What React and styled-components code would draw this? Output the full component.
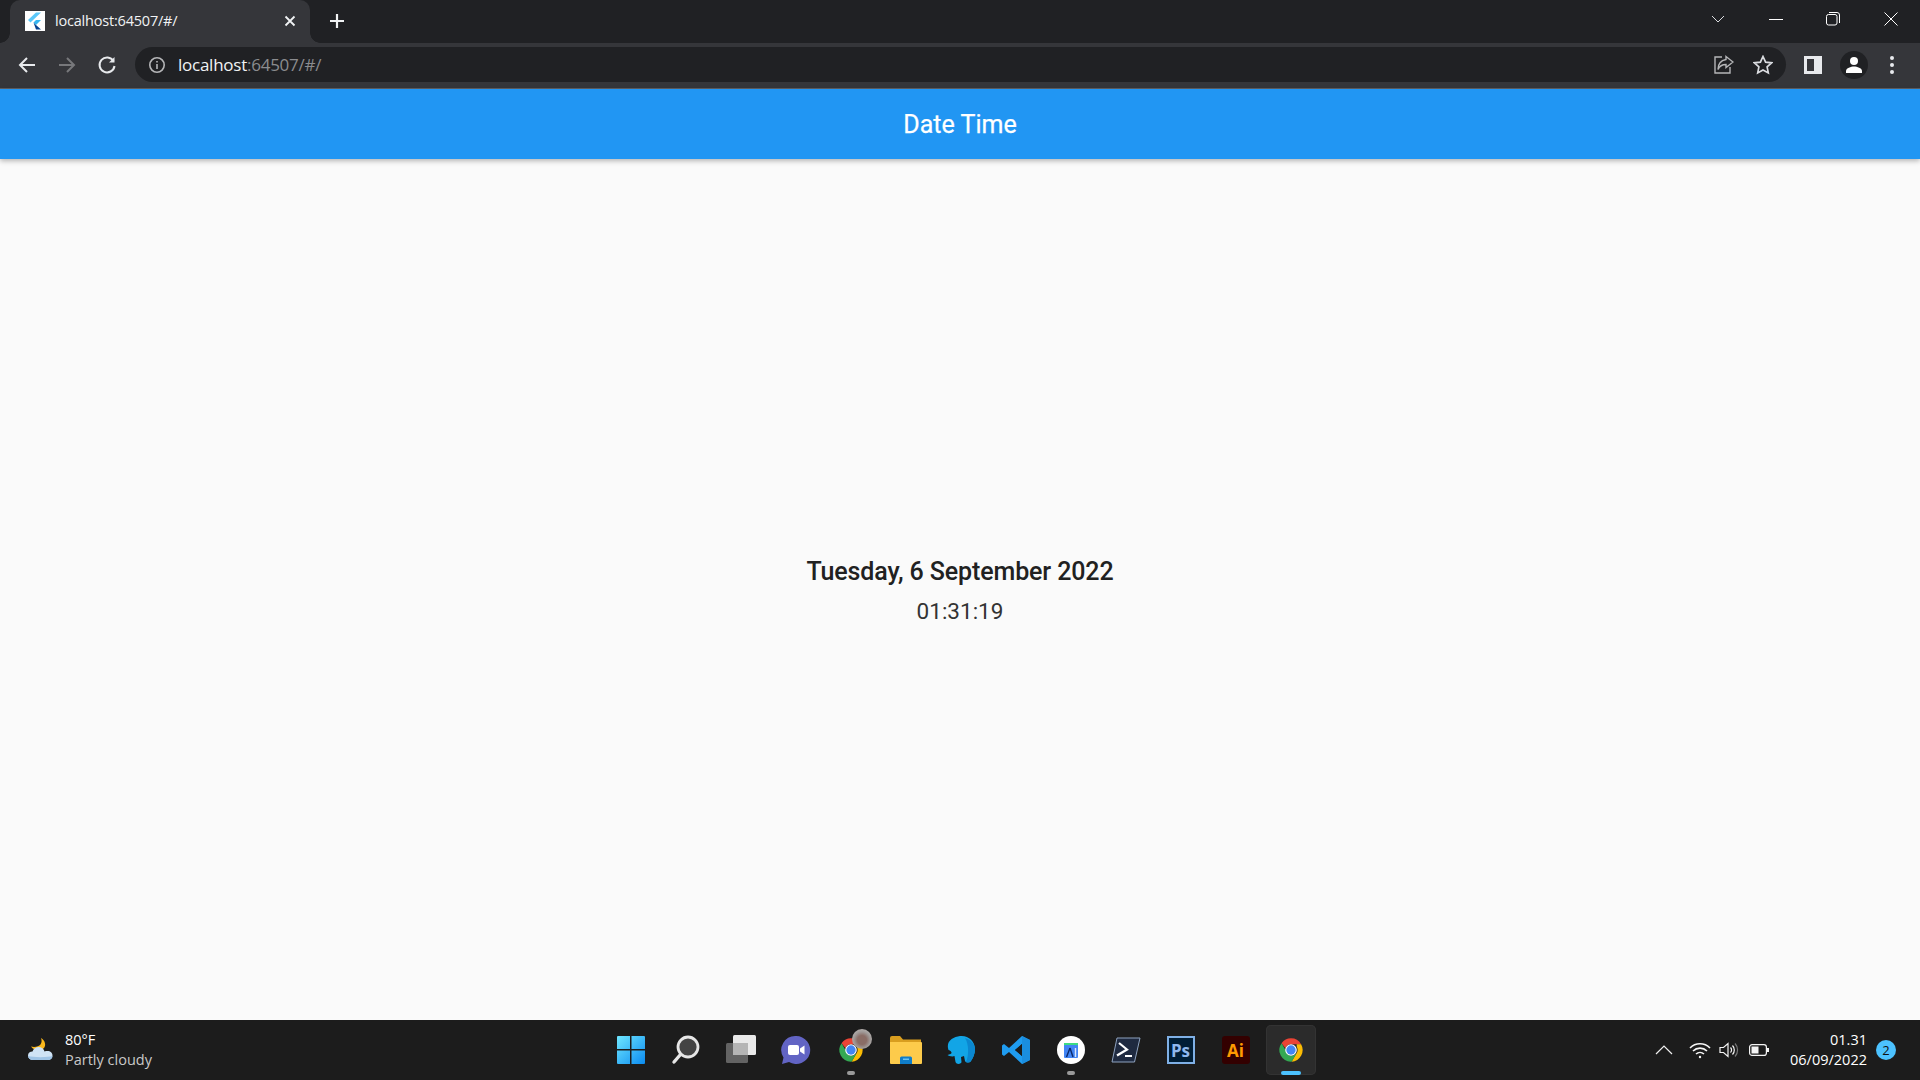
import React from "react";
import styled, { createGlobalStyle } from "styled-components";

const GlobalStyle = createGlobalStyle`
    html, body {
        margin: 0;
        padding: 0;
        width: 1920px;
        height: 1080px;
        overflow: hidden;
    }
    * {
        box-sizing: border-box;
    }
`;

const Page = styled.div`
    display: flex;
    flex-direction: column;
    width: 1920px;
    height: 1080px;
    background-color: #fafafa;
    font-family: "Roboto", sans-serif;
`;

/* browser chrome */
const TabStrip = styled.div`
    display: flex;
    align-items: flex-end;
    height: 43px;
    padding-left: 10px;
    background-color: #202124;
    flex-shrink: 0;
`;

const Tab = styled.div`
    position: relative;
    display: flex;
    align-items: center;
    width: 300px;
    height: 43px;
    padding: 0 12px 1px 15px;
    background-color: #35363a;
    border-radius: 10px 10px 0 0;

    &::before,
    &::after {
        content: "";
        position: absolute;
        bottom: 0;
        width: 10px;
        height: 10px;
        background: radial-gradient(circle at var(--cx) 0, #202124 9.5px, #35363a 10px);
    }
    &::before {
        --cx: 0;
        left: -10px;
    }
    &::after {
        --cx: 100%;
        right: -10px;
    }
`;

const Favicon = styled.div`
    display: flex;
    align-items: center;
    justify-content: center;
    width: 20px;
    height: 20px;
    background-color: #fff;
    flex-shrink: 0;
`;

const TabTitle = styled.span`
    flex: 1;
    margin-left: 10px;
    margin-top: -2px;
    font-family: "Open Sans", sans-serif;
    font-size: 14.5px;
    letter-spacing: -0.2px;
    color: #f1f3f4;
    white-space: nowrap;
`;

const NewTab = styled.div`
    display: flex;
    align-items: center;
    justify-content: center;
    width: 24px;
    height: 24px;
    margin: 0 0 10px 15px;
`;

const Caption = styled.div`
    display: flex;
    align-items: center;
    margin-left: auto;
    height: 43px;
    padding-bottom: 6px;
`;

const CaptionButton = styled.div`
    display: flex;
    align-items: center;
    justify-content: center;
    width: ${(p) => p.$w || 57.5}px;
`;

const Toolbar = styled.div`
    display: flex;
    align-items: center;
    height: 46px;
    padding: 0 10px 2px 7px;
    background-color: #35363a;
    border-bottom: 1px solid #5f6064;
    flex-shrink: 0;
`;

const ToolButton = styled.div`
    display: flex;
    align-items: center;
    justify-content: center;
    width: ${(p) => p.$w || 40}px;
    height: 35px;
    flex-shrink: 0;
`;

const AddressBar = styled.div`
    display: flex;
    align-items: center;
    flex: 1;
    height: 35px;
    margin: 0 7px 0 8px;
    padding: 0 5px 0 13px;
    background-color: #202124;
    border-radius: 18px;
`;

const Url = styled.span`
    flex: 1;
    margin-left: 12px;
    font-family: "Open Sans", sans-serif;
    font-size: 17px;
    letter-spacing: -0.25px;
    color: #f1f3f4;

    span {
        color: #8b8c8f;
    }
`;

const ProfileDot = styled.div`
    display: flex;
    align-items: center;
    justify-content: center;
    width: 28px;
    height: 28px;
    border-radius: 50%;
    background-color: #202124;
`;

/* flutter app */
const AppBar = styled.header`
    display: flex;
    align-items: center;
    justify-content: center;
    height: 70px;
    background-color: #2196f3;
    box-shadow: 0 2px 5px rgba(0, 0, 0, 0.28);
    flex-shrink: 0;
    position: relative;
`;

const AppTitle = styled.h1`
    margin: 0 0 -1px;
    font-size: 25px;
    font-weight: 400;
    -webkit-text-stroke: 0.25px #fff;
    color: #fff;
`;

const Main = styled.main`
    display: flex;
    flex: 1;
    flex-direction: column;
    align-items: center;
    justify-content: center;
    gap: 11px;
    padding-top: 2px;
    color: #212121;
`;

const DateText = styled.div`
    font-size: 25px;
    font-weight: 500;
    line-height: 30px;
    letter-spacing: -0.12px;
`;

const TimeText = styled.div`
    font-size: 22.5px;
    font-weight: 400;
    line-height: 26px;
    color: #333;
`;

/* windows taskbar */
const Taskbar = styled.footer`
    display: grid;
    grid-template-columns: 1fr auto 1fr;
    align-items: center;
    height: 60px;
    background-color: #1c1c1c;
    flex-shrink: 0;
`;

const Weather = styled.div`
    display: flex;
    align-items: center;
    padding-left: 26px;
`;

const WeatherText = styled.div`
    margin-left: 11px;
    font-family: "Open Sans", sans-serif;
    font-size: 14.5px;
    line-height: 20px;
    color: #fff;

    div + div {
        color: #c9c9c9;
    }
`;

const TaskIcons = styled.div`
    display: flex;
    gap: 5px;
    margin-left: 1px;
`;

const TaskItem = styled.div`
    position: relative;
    display: flex;
    align-items: center;
    justify-content: center;
    width: 50px;
    height: 50px;
    border-radius: 5px;
    background-color: ${(p) => (p.$active ? "#2b2b2b" : "transparent")};
    box-shadow: ${(p) => (p.$active ? "inset 0 0 0 1px #333" : "none")};
`;

const RunDot = styled.span`
    position: absolute;
    left: 50%;
    bottom: 0;
    transform: translateX(-50%);
    width: ${(p) => (p.$active ? 20 : 8)}px;
    height: 4px;
    border-radius: 2px;
    background-color: ${(p) => (p.$active ? "#4cc2ff" : "#9a9a9a")};
`;

const Avatar = styled.span`
    position: absolute;
    top: 4px;
    right: 4px;
    width: 20px;
    height: 20px;
    border-radius: 50%;
    background: radial-gradient(circle at 50% 55%, #8a6d66 0 30%, #a09a98 55%, #c9c6c4 100%);
`;

const Tray = styled.div`
    display: flex;
    align-items: center;
    justify-content: flex-end;
    padding-right: 24px;
`;

const TrayIcon = styled.div`
    display: flex;
    align-items: center;
    justify-content: center;
    width: ${(p) => p.$w}px;
`;

const Clock = styled.div`
    margin: 0 9px 0 15px;
    font-family: "Open Sans", sans-serif;
    font-size: 14.5px;
    line-height: 20px;
    text-align: right;
    color: #fff;
`;

const Badge = styled.div`
    display: flex;
    align-items: center;
    justify-content: center;
    width: 20px;
    height: 20px;
    border-radius: 50%;
    background-color: #4cc2ff;
    font-family: "Open Sans", sans-serif;
    font-size: 13px;
    color: #111;
`;

const FlutterLogo = () => (
    <svg width="16" height="18" viewBox="0 0 16 18">
        <path d="M9 0.500h5L3.500 10.500 1 8z" fill="#5ac8fa" />
        <path d="M9 8h5l-5 5-2.500-2.500z" fill="#35b5f0" />
        <path d="M6.500 10.500L9 13l5 4.500H9z" fill="#05408f" />
    </svg>
);

const Stroke = ({ w = 20, h = 20, view, color = "#e8eaed", sw = 2, children }) => (
    <svg width={w} height={h} viewBox={view || `0 0 ${w} ${h}`} fill="none" stroke={color} strokeWidth={sw}>
        {children}
    </svg>
);

const WeatherIcon = () => (
    <svg width="28" height="28" viewBox="0 0 28 28">
        <path d="M15 2c2 5-1 9-7 9-1 0-2 0-3-.4C7 14 13 16 17 13c4-3 2-9-2-11z" fill="#fbb81c" />
        <path d="M7 24c-3 0-5-2-5-4.500S4 15.500 6.500 15.500C7.500 12.500 10 11 12.500 11c3 0 5.500 2 6 4.500 1-.5 2-.5 3-.5 3 0 5 2 5 4.500S24.500 24 22 24z" fill="#cfe3f5" />
        <path d="M7 24c-3 0-5-2-5-4 5 1.500 20 1.500 24.500 0 0 2.500-2 4-4.500 4z" fill="#9fc4e6" />
    </svg>
);

const StartIcon = () => (
    <svg width="30" height="30" viewBox="0 0 30 30">
        <defs>
            <linearGradient id="win" x1="0" y1="0" x2="1" y2="1">
                <stop offset="0" stopColor="#6fe7ff" />
                <stop offset="1" stopColor="#0b8bf0" />
            </linearGradient>
        </defs>
        <path d="M1 2a1 1 0 0 1 1-1h12v13H1zM15.500 1H28a1 1 0 0 1 1 1v12H15.500zM1 15.500h13V29H2a1 1 0 0 1-1-1zM15.500 15.500H29V28a1 1 0 0 1-1 1H15.500z" fill="url(#win)" />
    </svg>
);

const SearchIcon = () => (
    <svg width="30" height="30" viewBox="0 0 30 30">
        <circle cx="17" cy="12" r="10" fill="#444" stroke="#e6e6e6" strokeWidth="2.800" />
        <path d="M9.500 19.500L3 27" stroke="#e6e6e6" strokeWidth="3.400" strokeLinecap="round" />
    </svg>
);

const TaskViewIcon = () => (
    <svg width="32" height="30" viewBox="0 0 32 30">
        <rect x="8" y="0" width="23" height="20" rx="1.500" fill="#e9e9e9" />
        <rect x="1" y="8" width="22" height="20" rx="1.500" fill="#6b6b6b" fillOpacity="0.9" />
        <rect x="8" y="8" width="15" height="12" fill="#b5b5b5" />
    </svg>
);

const TeamsIcon = () => (
    <svg width="30" height="30" viewBox="0 0 30 30">
        <path d="M15 1a14 14 0 1 1-7 26L1 29l1.500-6.500A14 14 0 0 1 15 1z" fill="#6264c4" />
        <rect x="7" y="10" width="11" height="10" rx="2" fill="#fff" />
        <path d="M19 13.500l4.500-3v9l-4.500-3z" fill="#fff" />
    </svg>
);

const ChromeIcon = ({ size = 28 }) => (
    <svg width={size} height={size} viewBox="0 0 48 48">
        <path d="M24 4a20 20 0 0 1 17.300 10H24a10 10 0 0 0-9.500 6.800L7.800 12.300A20 20 0 0 1 24 4z" fill="#ea4335" />
        <path d="M41.300 14A20 20 0 0 1 25 44l8.500-14.500A10 10 0 0 0 34 19l-.300-5z" fill="#fbbc04" />
        <path d="M25 44A20 20 0 0 1 7.800 12.300l8.500 14.500a10 10 0 0 0 11.500 6.500l5.700-3.800z" fill="#34a853" />
        <circle cx="24" cy="24" r="10" fill="#fff" />
        <circle cx="24" cy="24" r="8" fill="#4285f4" />
    </svg>
);

const FilesIcon = () => (
    <svg width="32" height="28" viewBox="0 0 32 28">
        <path d="M0 2a2 2 0 0 1 2-2h8l3 3.500h18V27H1a1 1 0 0 1-1-1z" fill="#d99e1f" />
        <path d="M0 6h31a1 1 0 0 1 1 1v20a1 1 0 0 1-1 1H1a1 1 0 0 1-1-1z" fill="#fdcb4b" />
        <path d="M10 28v-6a1.500 1.500 0 0 1 1.500-1.500h9A1.500 1.500 0 0 1 22 22v6z" fill="#0f7dc9" />
        <rect x="13" y="22.500" width="6" height="1.500" fill="#6cc4f2" />
    </svg>
);

const ElephantIcon = () => (
    <svg width="30" height="30" viewBox="0 0 30 30">
        <path d="M14 1c8-1 15 5 15 13 0 5-2 9-4 12-1 2-5 2-6 0l-1-5-3 1 .5 5c0 2-5 3-6 0l-1-6c-2 1-6 0-7-1l3-1c2-1 1-3-2-4C-.500 6 7 2 14 1z" fill="#12a5e6" />
        <path d="M19 3c6 2 10 6 10 11 0 5-2 9-4 12-1 1-3 2-5 1 3-6 3-18-1-24z" fill="#0b87cf" />
    </svg>
);

const VsCodeIcon = () => (
    <svg width="30" height="30" viewBox="0 0 30 30">
        <path d="M21 1l8 4v20l-8 4-13-12-5 4-2-1.500V10.500L3 9l5 4zM21 9l-7 6 7 6z" fill="#1f9cf0" />
        <path d="M21 1l8 4v20l-8 4z" fill="#1a8ee0" />
        <path d="M21 9l-7 6 7 6z" fill="#1c1c1c" />
    </svg>
);

const StudioIcon = () => (
    <svg width="28" height="28" viewBox="0 0 28 28">
        <circle cx="14" cy="14" r="14" fill="#fff" />
        <path d="M7 7h14v3H7z" fill="#3ddc84" />
        <rect x="7" y="9" width="14" height="13" rx="1" fill="#4285f4" />
        <path d="M13 12L9.500 21M13 12l3 9" stroke="#0b2a6b" strokeWidth="1.400" fill="none" />
        <path d="M18.500 12v9" stroke="#dce8fb" strokeWidth="1.400" />
    </svg>
);

const ShellIcon = () => (
    <svg width="30" height="26" viewBox="0 0 30 26">
        <path d="M6 1h23l-5.500 24H1z" fill="#1f2a40" stroke="#8ea2bf" strokeWidth="1" />
        <path d="M8 6l8 6.500-10 6" stroke="#fff" strokeWidth="2.200" fill="none" />
        <path d="M14 19h7" stroke="#fff" strokeWidth="2" />
    </svg>
);

const AppTile = styled.div`
    display: flex;
    align-items: center;
    justify-content: center;
    width: 28px;
    height: 28px;
    font-family: "Open Sans", sans-serif;
    font-size: 17px;
    font-weight: 700;
    color: ${(p) => p.$fg};
    background-color: ${(p) => p.$bg};
    border: ${(p) => (p.$edge ? `2px solid ${p.$edge}` : "none")};
    border-radius: ${(p) => p.$radius || 0}px;
`;

export default function App() {
    return (
        <Page>
            <GlobalStyle />

            <TabStrip>
                <Tab>
                    <Favicon>
                        <FlutterLogo />
                    </Favicon>
                    <TabTitle>localhost:64507/#/</TabTitle>
                    <Stroke w={16} h={16} color="#f1f3f4" sw={1.8}>
                        <path d="M3.500 3.500l9 9M12.500 3.500l-9 9" />
                    </Stroke>
                </Tab>
                <NewTab>
                    <Stroke w={16} h={16} color="#f1f3f4" sw={2.2}>
                        <path d="M8 1v14M1 8h14" />
                    </Stroke>
                </NewTab>
                <Caption>
                    <CaptionButton $w={59}>
                        <Stroke w={14} h={10} color="#dadce0" sw={1}>
                            <path d="M1 2l6 6 6-6" />
                        </Stroke>
                    </CaptionButton>
                    <CaptionButton>
                        <Stroke w={14} h={14} color="#fff" sw={1}>
                            <path d="M0 7.500h14" />
                        </Stroke>
                    </CaptionButton>
                    <CaptionButton>
                        <Stroke w={14} h={14} color="#fff" sw={1}>
                            <rect x="0.500" y="2.500" width="10.500" height="10.500" rx="2" />
                            <path d="M3 .500h8a2.500 2.500 0 0 1 2.500 2.500v8" />
                        </Stroke>
                    </CaptionButton>
                    <CaptionButton $w={58}>
                        <Stroke w={14} h={14} color="#fff" sw={1}>
                            <path d="M.500 .500l13 13M13.500 .500l-13 13" />
                        </Stroke>
                    </CaptionButton>
                </Caption>
            </TabStrip>

            <Toolbar>
                <ToolButton>
                    <Stroke w={20} h={20} sw={2}>
                        <path d="M18 10H3M10 3l-7 7 7 7" />
                    </Stroke>
                </ToolButton>
                <ToolButton>
                    <Stroke w={20} h={20} sw={2} color="#77787b">
                        <path d="M2 10h15M10 3l7 7-7 7" />
                    </Stroke>
                </ToolButton>
                <ToolButton>
                    <Stroke w={20} h={20} sw={2}>
                        <path d="M16.500 6A7.500 7.500 0 1 0 17.500 11" />
                        <path d="M17.500 2v5.500H12" fill="#e8eaed" stroke="none" />
                    </Stroke>
                </ToolButton>
                <AddressBar>
                    <Stroke w={18} h={18} color="#b5b6b8" sw={1.6}>
                        <circle cx="9" cy="9" r="7.200" />
                        <path d="M9 8v5M9 5v1.600" />
                    </Stroke>
                    <Url>
                        localhost<span>:64507/#/</span>
                    </Url>
                    <ToolButton $w={42}>
                        <Stroke w={20} h={20} color="#b5b6b8" sw={1.4}>
                            <path d="M8 2H1v16h15v-6" />
                            <path d="M12 1.500l7 5.500-7 5.500V9.500c-4 0-6.500 1.500-8 5 0-5 2.500-9 8-10z" />
                        </Stroke>
                    </ToolButton>
                    <ToolButton $w={36}>
                        <Stroke w={20} h={20} color="#dadce0" sw={1.7}>
                            <path d="M10 1.500l2.600 5.600 6 .7-4.500 4.100 1.200 6L10 15l-5.300 2.900 1.200-6L1.400 7.800l6-.7z" />
                        </Stroke>
                    </ToolButton>
                </AddressBar>
                <ToolButton $w={40}>
                    <svg width="18" height="18" viewBox="0 0 18 18">
                        <path d="M0 0h18v18H0zM3 3v12h7V3z" fill="#e8eaed" fillRule="evenodd" />
                    </svg>
                </ToolButton>
                <ToolButton $w={41}>
                    <ProfileDot>
                        <svg width="18" height="18" viewBox="0 0 18 18" fill="#fff">
                            <circle cx="9" cy="5" r="4" />
                            <path d="M1 17v-2c0-3 5-4.500 8-4.500s8 1.500 8 4.500v2z" />
                        </svg>
                    </ProfileDot>
                </ToolButton>
                <ToolButton $w={36}>
                    <svg width="6" height="20" viewBox="0 0 6 20" fill="#e8eaed">
                        <circle cx="3" cy="3" r="2" />
                        <circle cx="3" cy="10" r="2" />
                        <circle cx="3" cy="17" r="2" />
                    </svg>
                </ToolButton>
            </Toolbar>

            <AppBar>
                <AppTitle>Date Time</AppTitle>
            </AppBar>

            <Main>
                <DateText>Tuesday, 6 September 2022</DateText>
                <TimeText>01:31:19</TimeText>
            </Main>

            <Taskbar>
                <Weather>
                    <WeatherIcon />
                    <WeatherText>
                        <div>80°F</div>
                        <div>Partly cloudy</div>
                    </WeatherText>
                </Weather>
                <TaskIcons>
                    <TaskItem><StartIcon /></TaskItem>
                    <TaskItem><SearchIcon /></TaskItem>
                    <TaskItem><TaskViewIcon /></TaskItem>
                    <TaskItem><TeamsIcon /></TaskItem>
                    <TaskItem>
                        <ChromeIcon />
                        <Avatar />
                        <RunDot />
                    </TaskItem>
                    <TaskItem><FilesIcon /></TaskItem>
                    <TaskItem><ElephantIcon /></TaskItem>
                    <TaskItem><VsCodeIcon /></TaskItem>
                    <TaskItem>
                        <StudioIcon />
                        <RunDot />
                    </TaskItem>
                    <TaskItem><ShellIcon /></TaskItem>
                    <TaskItem>
                        <AppTile $bg="#001e36" $fg="#8fb8ee" $edge="#7fb0e6">Ps</AppTile>
                    </TaskItem>
                    <TaskItem>
                        <AppTile $bg="#330000" $fg="#ff9a00" $radius={3}>Ai</AppTile>
                    </TaskItem>
                    <TaskItem $active>
                        <ChromeIcon />
                        <RunDot $active />
                    </TaskItem>
                </TaskIcons>
                <Tray>
                    <TrayIcon $w={42}>
                        <Stroke w={18} h={12} color="#f0f0f0" sw={1.2}>
                            <path d="M1 10l8-8 8 8" />
                        </Stroke>
                    </TrayIcon>
                    <TrayIcon $w={30}>
                        <Stroke w={22} h={18} color="#f5f5f5" sw={1.6}>
                            <path d="M1 7a14 14 0 0 1 20 0M4 10a10 10 0 0 1 14 0M7 13a6 6 0 0 1 8 0" />
                            <circle cx="11" cy="16" r="1.200" fill="#f5f5f5" stroke="none" />
                        </Stroke>
                    </TrayIcon>
                    <TrayIcon $w={28}>
                        <Stroke w={20} h={18} color="#f5f5f5" sw={1.2}>
                            <path d="M1 6.500h3.500L9 2.500v13l-4.500-4H1z" />
                            <path d="M11.500 6.500a3.500 3.500 0 0 1 0 5M13.500 4.500a6.500 6.500 0 0 1 0 9" />
                            <path d="M16 2.500a9.500 9.500 0 0 1 0 13" stroke="#777" />
                        </Stroke>
                    </TrayIcon>
                    <TrayIcon $w={32}>
                        <svg width="20" height="12" viewBox="0 0 20 12" fill="none">
                            <rect x="0.600" y="0.600" width="16.800" height="10.800" rx="2.500" stroke="#f5f5f5" strokeWidth="1.200" />
                            <rect x="2.500" y="2.500" width="7" height="7" fill="#f5f5f5" />
                            <rect x="18" y="4" width="2" height="4" fill="#f5f5f5" />
                        </svg>
                    </TrayIcon>
                    <Clock>
                        <div>01.31</div>
                        <div>06/09/2022</div>
                    </Clock>
                    <Badge>2</Badge>
                </Tray>
            </Taskbar>
        </Page>
    );
}
